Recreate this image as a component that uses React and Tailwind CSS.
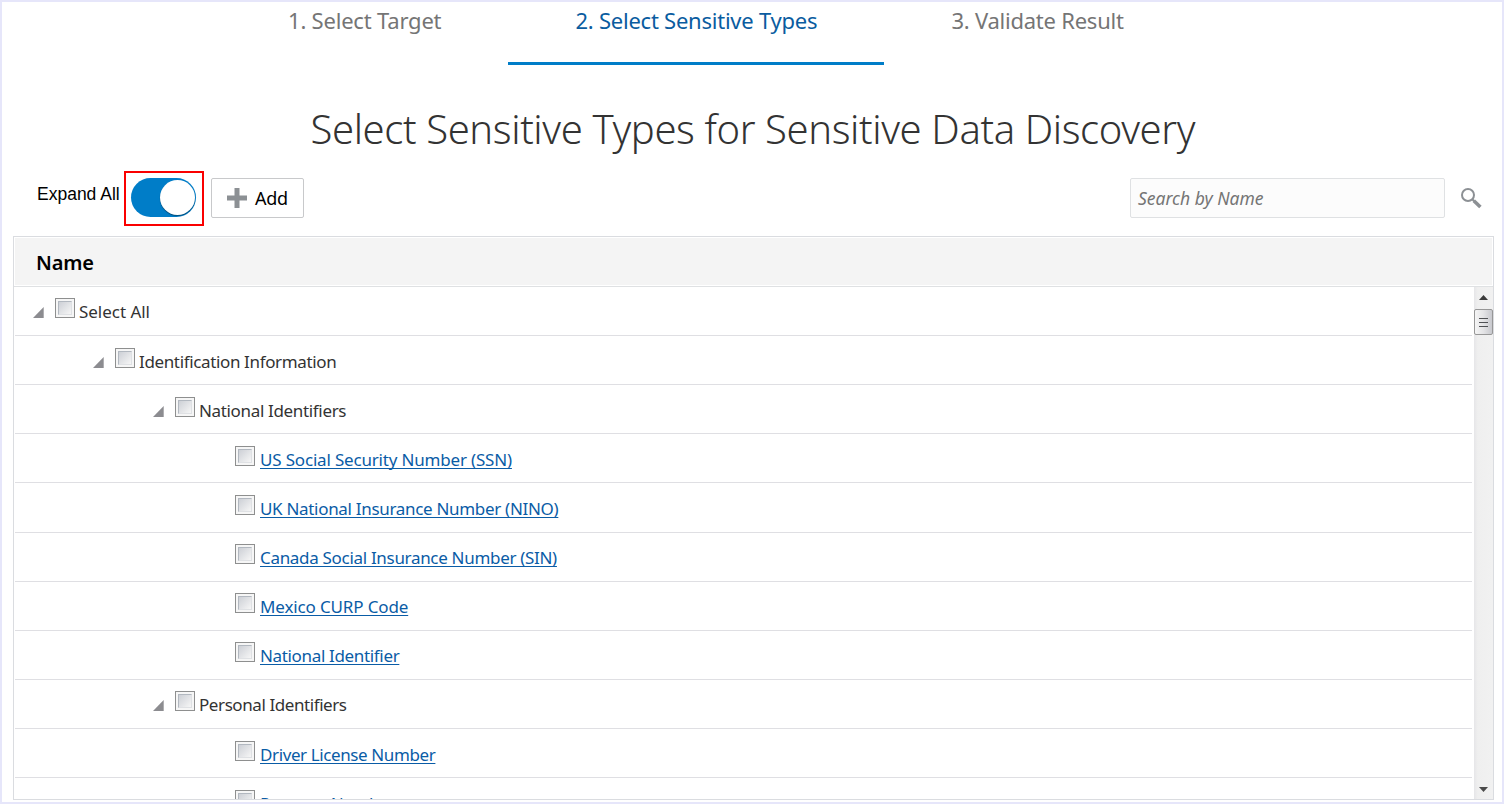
const rows = [
  { text: "Select All", indent: "pl-[18px]", height: "h-[49px] pt-[11px]", track: "tracking-[-0.03px]" },
  { text: "Identification Information", indent: "pl-[78px]", height: "h-[49px] pt-[12px]", track: "tracking-[-0.36px]" },
  { text: "National Identifiers", indent: "pl-[138px]", height: "h-[49px] pt-[12px]", track: "tracking-[-0.34px]" },
  { text: "US Social Security Number (SSN)", leaf: true, height: "h-[49px] pt-[12px]", track: "tracking-[-0.18px]" },
  { text: "UK National Insurance Number (NINO)", leaf: true, height: "h-[50px] pt-[12px]", track: "tracking-[-0.31px]" },
  { text: "Canada Social Insurance Number (SIN)", leaf: true, height: "h-[49px] pt-[11px]", track: "tracking-[-0.31px]" },
  { text: "Mexico CURP Code", leaf: true, height: "h-[49px] pt-[11px]", track: "tracking-[-0.14px]" },
  { text: "National Identifier", leaf: true, height: "h-[49px] pt-[11px]", track: "tracking-[-0.34px]" },
  { text: "Personal Identifiers", indent: "pl-[138px]", height: "h-[49px] pt-[11px]", track: "tracking-[-0.42px]" },
  { text: "Driver License Number", leaf: true, height: "h-[49px] pt-[12px]", track: "tracking-[-0.39px]" },
  { text: "Passport Number", leaf: true, height: "h-[49px] pt-[12px]", track: "tracking-[-0.4px]" },
];

function Checkbox() {
  return (
    <span className="h-5 w-5 shrink-0 border border-[#8e8f8f] bg-[#f6f6f6] p-[2px]">
      <span className="block h-[14px] w-[14px] border border-t-[#b2b8c0] border-l-[#b2b8c0] border-r-[#dfe1e4] border-b-[#dfe1e4] bg-linear-to-br from-[#cdd0d6] to-[#f6f6f6]" />
    </span>
  );
}

function Row({ text, indent, leaf, height, track }) {
  return (
    <div className={`flex shrink-0 items-baseline border-b border-[#dfdfe3] ${height} ${leaf ? "pl-[220px]" : indent}`}>
      {!leaf && (
        <svg className="mr-[11px] mb-px h-[11px] w-[11px] shrink-0" viewBox="0 0 11 11">
          <path d="M10.7 0v11H0z" fill="#8c8c90" />
        </svg>
      )}
      <Checkbox />
      {leaf ? (
        <a className={`ml-[5px] text-[17px] leading-5 whitespace-nowrap text-[#0a5ca6] underline decoration-1 underline-offset-[2px] [text-decoration-skip-ink:none] ${track}`}>{text}</a>
      ) : (
        <span className={`ml-[4px] text-[17px] leading-5 whitespace-nowrap text-[#333] ${track}`}>{text}</span>
      )}
    </div>
  );
}

function Scrollbar() {
  return (
    <div className="flex w-[19px] flex-col items-center justify-between bg-linear-to-r from-[#e6e6e8] via-[#efefef] via-20% to-[#f1f1f1]">
      <div className="flex w-full flex-col items-center">
        <svg className="mt-[8px] h-[5px] w-[9px]" viewBox="0 0 9 5">
          <path d="M4.5 0L9 5H0z" fill="#3a3a3a" />
        </svg>
        <div className="mt-[9px] flex h-[26px] w-[19px] flex-col items-center justify-center gap-[3px] rounded-[2px] border border-[#979797] bg-linear-to-r from-[#f5f5f5] via-[#e4e4e6] to-[#c8c9ce]">
          <span className="h-px w-[9px] bg-[#505255]" />
          <span className="h-px w-[9px] bg-[#505255]" />
          <span className="h-px w-[9px] bg-[#505255]" />
        </div>
      </div>
      <svg className="mb-[7px] h-[5px] w-[9px]" viewBox="0 0 9 5">
        <path d="M4.5 5L9 0H0z" fill="#4a4a4a" />
      </svg>
    </div>
  );
}

export default function App() {
  return (
    <div className="flex h-[804px] w-[1504px] flex-col overflow-hidden border-2 border-[#e6e6fa] bg-white font-['Noto_Sans','Open_Sans',sans-serif]">
      <nav className="flex h-[63px] shrink-0 pl-[219px] text-[22px] leading-[36px] whitespace-nowrap text-[#757575]">
        <div className="w-[287px] pl-[67px] tracking-[-0.2px]">1. Select Target</div>
        <div className="w-[376px] border-b-[3px] border-[#007dc8] pl-[67.5px] tracking-[-0.24px] text-[#0a5ca0]">2. Select Sensitive Types</div>
        <div className="pl-[67.5px] tracking-[-0.24px]">3. Validate Result</div>
      </nav>

      <h1 className="mt-[38px] h-[54px] shrink-0 pl-[308.5px] text-[40px] leading-[52px] font-light tracking-[-0.38px] whitespace-nowrap text-[#333]">
        Select Sensitive Types for Sensitive Data Discovery
      </h1>

      <div className="mt-[14px] flex h-[55px] shrink-0 pl-[35px]">
        <span className="w-[87px] shrink-0 pt-[13px] font-['Liberation_Sans',Arial,sans-serif] text-[17.5px] leading-5 whitespace-nowrap text-black">Expand All</span>
        <div className="h-[55px] w-[80px] border-2 border-[#fa0000] p-[5px]">
          <div className="flex h-[39px] w-[65px] items-center justify-end rounded-full bg-[#007dc8] pr-px">
            <span className="h-[35px] w-[35px] rounded-full bg-white shadow-[0_1px_1px_rgba(0,0,0,0.4)]" />
          </div>
        </div>
        <button className="mt-[7px] ml-[7px] flex h-[40px] w-[93px] items-center rounded-[2px] border border-[#c8c9cb] bg-white pl-[15px] text-[18px] tracking-[-0.3px] text-black">
          <svg className="mr-[8px] h-5 w-5" viewBox="0 0 20 20">
            <path d="M7.5 0h5v7.5H20v5h-7.5V20h-5v-7.5H0v-5h7.5z" fill="#8c9094" />
          </svg>
          Add
        </button>
        <div className="mt-[7px] ml-auto flex h-[40px] w-[315px] items-center rounded-[2px] border border-[#dfe1e3] bg-[#fcfcfc] pl-[7px] text-[17.5px] text-[#757575] italic">
          Search by Name
        </div>
        <svg className="mt-[17px] mr-[20px] ml-[16px] h-[21px] w-[21px]" viewBox="0 0 21 21" fill="none" stroke="#8c9094">
          <circle cx="7" cy="7" r="6" strokeWidth="2" />
          <path d="M11.3 11.3l2 2" strokeWidth="2" />
          <path d="M12.8 12.8l6.6 6.2" strokeWidth="3.6" />
        </svg>
      </div>

      <div className="mt-[10px] mr-[8px] ml-[11px] flex h-[564px] shrink-0 flex-col border border-[#dadce0]">
        <div className="flex h-[50px] shrink-0 border-b border-[#dfe1e3] p-px pb-px">
          <div className="flex-1 bg-[#f4f4f4] pl-[21px] text-[20px] leading-[50px] font-semibold tracking-[-0.15px] text-black">Name</div>
        </div>
        <div className="flex min-h-0 flex-1 overflow-hidden">
          <div className="mr-[2px] ml-px flex min-w-0 flex-1 flex-col overflow-hidden">
            {rows.map((r) => (
              <Row key={r.text} {...r} />
            ))}
          </div>
          <Scrollbar />
        </div>
      </div>
    </div>
  );
}
